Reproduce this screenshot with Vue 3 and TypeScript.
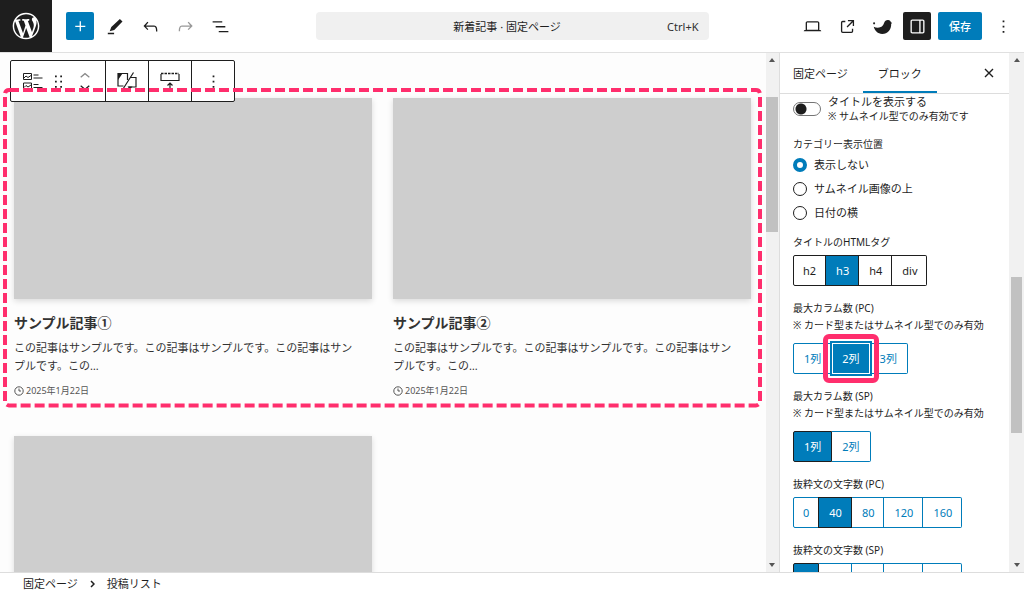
<script setup lang="ts">
import { ref } from 'vue'

interface Post {
  id: number
  title: string
}

const excerpt = 'この記事はサンプルです。この記事はサンプルです。この記事はサンプルです。この…'
const date = '2025年1月22日'
const posts: Post[] = [
  { id: 1, title: 'サンプル記事①' },
  { id: 2, title: 'サンプル記事②' },
]

const showTitle = ref(false)
const category = ref('none')
const categories = [
  { value: 'none', label: '表示しない' },
  { value: 'thumb', label: 'サムネイル画像の上' },
  { value: 'date', label: '日付の横' },
]

interface Group {
  key: string
  label: string
  help?: string
  dark?: boolean
  focus?: boolean
  options: string[]
  value: string
}

const columnHelp = '※ カード型またはサムネイル型でのみ有効'
const lengths = ['0', '40', '80', '120', '160']
const groups = ref<Group[]>([
  { key: 'tag', label: 'タイトルのHTMLタグ', dark: true, options: ['h2', 'h3', 'h4', 'div'], value: 'h3' },
  { key: 'col-pc', label: '最大カラム数 (PC)', help: columnHelp, focus: true, options: ['1列', '2列', '3列'], value: '2列' },
  { key: 'col-sp', label: '最大カラム数 (SP)', help: columnHelp, options: ['1列', '2列'], value: '1列' },
  { key: 'len-pc', label: '抜粋文の文字数 (PC)', options: lengths, value: '40' },
  { key: 'len-sp', label: '抜粋文の文字数 (SP)', options: lengths, value: '0' },
])
</script>

<template>
  <div class="editor">
    <header class="topbar">
      <div class="tools">
        <a class="logo" href="#" aria-label="WordPress">
          <svg viewBox="-2 -2 24 24"><path d="M20 10c0-5.51-4.49-10-10-10C4.48 0 0 4.49 0 10c0 5.52 4.48 10 10 10 5.51 0 10-4.48 10-10zM7.78 15.37L4.37 6.22c.55-.02 1.17-.08 1.17-.08.5-.06.44-1.13-.06-1.11 0 0-1.45.11-2.37.11-.18 0-.37 0-.58-.01C4.12 2.69 6.87 1.11 10 1.11c2.33 0 4.45.87 6.05 2.34-.68-.11-1.65.39-1.65 1.58 0 .74.45 1.36.9 2.1.35.61.55 1.36.55 2.46 0 1.49-1.4 5-1.4 5l-3.03-8.37c.54-.02.82-.17.82-.17.5-.05.44-1.25-.06-1.22 0 0-1.44.12-2.38.12-.87 0-2.33-.12-2.33-.12-.5-.03-.56 1.2-.06 1.22l.92.08 1.26 3.41zM17.41 10c.24-.64.74-1.87.43-4.25.7 1.29 1.05 2.71 1.05 4.25 0 3.29-1.73 6.24-4.4 7.78.97-2.59 1.94-5.2 2.92-7.78zM6.1 18.09C3.12 16.65 1.11 13.53 1.11 10c0-1.3.23-2.48.72-3.59C3.25 10.3 4.67 14.2 6.1 18.09zm4.03-6.63l2.58 6.98c-.86.29-1.76.45-2.71.45-.79 0-1.57-.11-2.29-.33.81-2.38 1.62-4.74 2.42-7.1z" /></svg>
        </a>
        <button class="icon-btn primary" type="button" aria-label="ブロック挿入">
          <svg viewBox="0 0 24 24"><path d="M11 12.5V17.5H12.5V12.5H17.5V11H12.5V6H11V11H6V12.5H11Z" /></svg>
        </button>
        <button class="icon-btn" type="button" aria-label="ツール">
          <svg viewBox="0 0 24 24"><path d="m20 6.400-3-3-9.800 9.100-1.800 5 5.200-1.600L20 6.400ZM10.400 19.200H3.200v1.600h7.200v-1.600Z" /></svg>
        </button>
        <button class="icon-btn" type="button" aria-label="元に戻す">
          <svg viewBox="0 0 24 24"><path d="M18.3 11.7c-.6-.6-1.4-.9-2.3-.9H6.7l2.9-3.3-1.1-1-4.5 5L8.5 16l1-1-2.7-2.7H16c.5 0 .9.2 1.3.5 1 1 1 3.4 1 4.5v.3h1.5v-.2c0-1.5 0-4.3-1.5-5.7z" /></svg>
        </button>
        <button class="icon-btn faded" type="button" aria-label="やり直す">
          <svg viewBox="0 0 24 24"><path d="M15.6 6.5l-1.1 1 2.9 3.3H8c-.9 0-1.7.3-2.3.9-1.4 1.5-1.4 4.2-1.4 5.6v.2h1.5v-.3c0-1.1 0-3.5 1-4.5.3-.3.7-.5 1.3-.5h9.2L14.5 15l1.1 1.1 4.6-4.6-4.6-5z" /></svg>
        </button>
        <button class="icon-btn" type="button" aria-label="リスト表示">
          <svg viewBox="0 0 24 24"><path d="M3 6h11v1.5H3V6Zm3.5 5.5h11V13h-11v-1.5ZM21 17H10v1.5h11V17Z" /></svg>
        </button>
      </div>
      <button class="command" type="button">
        <span class="doc">新着記事 · 固定ページ</span>
        <span class="shortcut">Ctrl+K</span>
      </button>
      <div class="actions">
        <button class="icon-btn" type="button" aria-label="表示">
          <svg viewBox="0 0 24 24"><path d="M20.5 16h-.7V8c0-1.1-.9-2-2-2H6.2c-1.1 0-2 .9-2 2v8h-.7c-.8 0-1.5.7-1.5 1.5h20c0-.8-.7-1.5-1.5-1.5zM5.7 8c0-.3.2-.5.5-.5h11.6c.3 0 .5.2.5.5v7.6H5.7V8z" /></svg>
        </button>
        <button class="icon-btn" type="button" aria-label="固定ページを表示">
          <svg viewBox="0 0 24 24"><path d="M19.5 4.5h-7V6h4.44l-5.97 5.97 1.06 1.06L18 7.06v4.44h1.5v-7Zm-13 1a2 2 0 0 0-2 2v10a2 2 0 0 0 2 2h10a2 2 0 0 0 2-2v-3H17v3a.5.5 0 0 1-.5.5h-10a.5.5 0 0 1-.5-.5v-10a.5.5 0 0 1 .5-.5h3V5.5h-3Z" /></svg>
        </button>
        <button class="icon-btn" type="button" aria-label="テーマ設定">
          <svg viewBox="0 0 24 24"><circle cx="2.4" cy="8.4" r="1.200" /><path d="M2 12.400c2.600 1.300 5.600 1.400 8 .3 2-1 2.900-2.400 3.700-4.500.9-2.500 2.600-3.700 4.800-3.500 1.800.2 2.800 1.200 3.200 2.500l1.300.8-1.100.8c.4 6.600-3.900 11.700-10.200 11.700C6.500 20.500 3.200 17.100 2 12.400z" /></svg>
        </button>
        <button class="icon-btn active" type="button" aria-label="設定" aria-pressed="true">
          <svg viewBox="0 0 24 24"><path d="M18 4H6c-1.1 0-2 .9-2 2v12c0 1.1.9 2 2 2h12c1.1 0 2-.9 2-2V6c0-1.1-.9-2-2-2zm-4 14.5H6c-.3 0-.5-.2-.5-.5V6c0-.3.2-.5.5-.5h8v13zm4.5-.5c0 .3-.2.5-.5.5h-2.5v-13H18c.3 0 .5.2.5.5v12z" /></svg>
        </button>
        <button class="save" type="button">保存</button>
        <button class="icon-btn" type="button" aria-label="オプション">
          <svg viewBox="0 0 24 24"><path d="M13 19h-2v-2h2v2zm0-6h-2v-2h2v2zm0-6h-2V5h2v2z" /></svg>
        </button>
      </div>
    </header>

    <div class="body">
      <main class="canvas">
        <div class="block-toolbar" role="toolbar" aria-label="ブロックツール">
          <div class="section wide">
            <button class="tool" type="button" aria-label="投稿リスト">
              <svg class="list-icon" viewBox="0 0 20 18" fill="none" stroke="#1e1e1e"><path d="M.5 1.5h8v6h-8zM.5 11h8v6h-8zM1 6l2-2 2 1.500L8 3.500M1 15.500l2-2 2 1.500 3-2M10.500 3h5M10.500 6h9M10.500 12.500h5M10.500 15.500h9" /></svg>
            </button>
            <button class="tool" type="button" aria-label="ドラッグ">
              <svg viewBox="0 0 24 24"><path d="M8 7h2V5H8v2zm0 6h2v-2H8v2zm0 6h2v-2H8v2zm6-14v2h2V5h-2zm0 8h2v-2h-2v2zm0 6h2v-2h-2v2z" /></svg>
            </button>
            <div class="movers">
              <button class="tool muted" type="button" aria-label="上に移動">
                <svg viewBox="5 7 14 7"><path d="M6.5 12.4L12 8l5.5 4.4-.9 1.2L12 10l-4.5 3.6-1-1.2z" /></svg>
              </button>
              <button class="tool" type="button" aria-label="下に移動">
                <svg viewBox="5 10 14 7"><path d="M17.5 11.6L12 16l-5.5-4.4.9-1.2L12 14l4.5-3.6 1 1.2z" /></svg>
              </button>
            </div>
          </div>
          <div class="section">
            <button class="tool" type="button" aria-label="スタイル">
              <svg class="style-icon" viewBox="0 0 20 18" fill="none" stroke="#1e1e1e" stroke-width="1.2"><path d="M6.500 14H1V1.500h9.500V8M16.500.5 6 17M13.500 5.500H19V15h-7.500" /><path d="M1 1.500h4.500L1 8zM10.500 14.500h5L13 17.500z" fill="#1e1e1e" stroke="none" /></svg>
            </button>
          </div>
          <div class="section">
            <button class="tool" type="button" aria-label="追加">
              <svg class="insert-icon" viewBox="0 0 20 18" fill="none" stroke="#1e1e1e" stroke-width="1.2"><path d="M1 2v6.500h18V2" /><path d="M1 1.500h18" stroke-width="1.500" stroke-dasharray="2.500 1" /><path d="M10 18v-6.500M7.500 13.500 10 11l2.500 2.500" /></svg>
            </button>
          </div>
          <div class="section">
            <button class="tool" type="button" aria-label="オプション">
              <svg viewBox="0 0 24 24"><path d="M13 19h-2v-2h2v2zm0-6h-2v-2h2v2zm0-6h-2V5h2v2z" /></svg>
            </button>
          </div>
        </div>

        <div class="row">
          <article v-for="post in posts" :key="post.id" class="card">
            <div class="thumb"></div>
            <h3>{{ post.title }}</h3>
            <p>{{ excerpt }}</p>
            <time>
              <svg viewBox="0 0 10 10" fill="none" stroke="#555"><circle cx="5" cy="5" r="4.2" /><path d="M5 2.500V5h2" /></svg>
              {{ date }}
            </time>
          </article>
          <svg class="marquee" aria-hidden="true"><rect width="100%" height="100%" rx="4" /></svg>
        </div>
        <div class="row">
          <article class="card"><div class="thumb"></div></article>
        </div>
      </main>

      <div class="scrollbar narrow" aria-hidden="true">
        <i class="up"></i>
        <div class="track"><div class="before-a"></div><div class="thumb-bar size-a"></div></div>
        <i class="down"></i>
      </div>

      <aside class="sidebar">
        <div class="tabs" role="tablist">
          <button type="button" role="tab" aria-selected="false">固定ページ</button>
          <button type="button" role="tab" class="current" aria-selected="true">ブロック</button>
          <button type="button" class="close" aria-label="設定を閉じる">
            <svg viewBox="0 0 10 10" fill="none" stroke="#1e1e1e" stroke-width="1.400"><path d="m1 1 8 8M9 1 1 9" /></svg>
          </button>
        </div>
        <div class="panel">
          <div class="toggle-row">
            <input id="show-title" v-model="showTitle" class="toggle" type="checkbox" />
            <div>
              <label for="show-title">タイトルを表示する</label>
              <p class="help">※ サムネイル型でのみ有効です</p>
            </div>
          </div>

          <fieldset class="radios">
            <legend>カテゴリー表示位置</legend>
            <label v-for="c in categories" :key="c.value">
              <input v-model="category" type="radio" name="category" :value="c.value" />
              {{ c.label }}
            </label>
          </fieldset>

          <div v-for="g in groups" :key="g.key" class="field">
            <div :id="g.key" class="field-label">{{ g.label }}</div>
            <p v-if="g.help" class="help note">{{ g.help }}</p>
            <div
              class="segments"
              :class="{ dark: g.dark, focus: g.focus, roomy: g.help }"
              role="group"
              :aria-labelledby="g.key"
            >
              <button
                v-for="o in g.options"
                :key="o"
                type="button"
                :class="{ on: o === g.value }"
                :aria-pressed="o === g.value"
                @click="g.value = o"
              >{{ o }}</button>
            </div>
          </div>
        </div>
      </aside>

      <div class="scrollbar" aria-hidden="true">
        <i class="up"></i>
        <div class="track"><div class="before-b"></div><div class="thumb-bar size-b"></div></div>
        <i class="down"></i>
      </div>
    </div>

    <footer class="crumbs">
      <a href="#">固定ページ</a>
      <svg viewBox="0 0 5 8" fill="none" stroke="#1e1e1e" stroke-width="1.500"><path d="m1 1 3 3-3 3" /></svg>
      <a href="#">投稿リスト</a>
    </footer>
  </div>
</template>

<style>
html,
body {
  margin: 0;
  background: #fff;
}
</style>

<style scoped>
* {
  box-sizing: border-box;
}
.editor {
  display: flex;
  flex-direction: column;
  height: 100vh;
  overflow: hidden;
  color: #1e1e1e;
  font: 11px/17px "Noto Sans", "Noto Sans CJK JP", sans-serif;
}
button {
  margin: 0;
  padding: 0;
  border: 0;
  background: none;
  color: inherit;
  font: inherit;
  white-space: nowrap;
}
svg {
  display: block;
  flex: none;
}
p,
h3 {
  margin: 0;
}

.topbar {
  display: grid;
  grid-template-columns: 1fr minmax(0, 393px) 1fr;
  align-items: center;
  flex: none;
  height: 53px;
  border-bottom: 1px solid #e0e0e0;
}
.tools,
.actions {
  display: flex;
  align-items: center;
  gap: 7px;
}
.actions {
  justify-content: flex-end;
  padding-right: 7px;
}
.logo {
  display: flex;
  align-items: center;
  justify-content: center;
  width: 52px;
  height: 52px;
  margin-right: 7px;
  background: #1e1e1e;
}
.logo svg {
  width: 32px;
  height: 32px;
  fill: #fff;
}
.icon-btn {
  display: flex;
  align-items: center;
  justify-content: center;
  width: 28px;
  height: 28px;
  border-radius: 2px;
}
.icon-btn svg {
  width: 21px;
  height: 21px;
  fill: #1e1e1e;
}
.icon-btn.primary {
  background: #007cba;
}
.icon-btn.active {
  background: #1e1e1e;
}
.icon-btn.primary svg,
.icon-btn.active svg {
  fill: #fff;
}
.icon-btn.faded {
  opacity: 0.45;
}
.command {
  display: grid;
  grid-template-columns: 1fr auto 1fr;
  align-items: center;
  height: 28px;
  padding: 0 10px 0 0;
  border-radius: 4px;
  background: #f0f0f0;
}
.doc {
  grid-column: 2;
}
.shortcut {
  text-align: right;
  color: #2f2f2f;
}
.save {
  width: 44px;
  height: 28px;
  border-radius: 2px;
  background: #007cba;
  color: #fff;
  font-weight: 500;
}

.body {
  display: flex;
  flex: 1;
  min-height: 0;
}
.canvas {
  position: relative;
  flex: 1;
  min-width: 0;
  padding: 45px 15px 0 14px;
  overflow: hidden;
  background: #fdfdfd;
}
.row {
  position: relative;
  display: grid;
  grid-template-columns: 1fr 1fr;
  gap: 21px;
  margin-bottom: 39px;
}
.thumb {
  aspect-ratio: 16 / 9;
  background: #cecece;
  box-shadow: 0 2px 6px rgba(0, 0, 0, 0.14);
}
.card {
  color: #333;
}
.card h3 {
  margin-top: 14px;
  font-size: 14px;
  font-weight: 700;
  line-height: 20px;
}
.card p {
  margin-top: 6px;
  padding-right: 12px;
  font-size: 11px;
  line-height: 18px;
}
.card time {
  display: flex;
  align-items: center;
  gap: 2px;
  margin-top: 10px;
  color: #555;
  font-size: 9px;
  line-height: 12px;
}
.card time svg {
  width: 10px;
  height: 10px;
}
.marquee {
  position: absolute;
  z-index: 3;
  top: -8px;
  left: -9px;
  width: calc(100% + 18px);
  height: calc(100% + 16px);
  overflow: visible;
  pointer-events: none;
}
.marquee rect {
  fill: none;
  stroke: #ff2e6d;
  stroke-width: 4px;
  stroke-dasharray: 10 4;
}

.block-toolbar {
  position: absolute;
  z-index: 2;
  top: 7px;
  left: 10px;
  display: flex;
  height: 42px;
  border: 1px solid #1e1e1e;
  border-radius: 2px;
  background: #fff;
}
.section {
  display: flex;
  align-items: center;
  justify-content: center;
  width: 43px;
}
.section + .section {
  border-left: 1px solid #1e1e1e;
}
.section.wide {
  width: 94px;
  gap: 5px;
  padding-right: 3px;
}
.tool svg {
  width: 21px;
  height: 21px;
  fill: #1e1e1e;
}
.tool .list-icon,
.tool .style-icon,
.tool .insert-icon {
  width: 20px;
  height: 18px;
  fill: none;
}
.movers {
  display: flex;
  flex-direction: column;
  gap: 7px;
  padding-left: 5px;
}
.movers svg {
  width: 12px;
  height: 6px;
}
.muted svg {
  fill: #888;
}

.scrollbar {
  display: flex;
  flex-direction: column;
  flex: none;
  width: 15px;
  padding: 5px 2px;
  background: #f1f1f1;
}
.scrollbar.narrow {
  width: 13px;
  padding: 5px 1px 5px 0;
}
.scrollbar i {
  flex: none;
  align-self: center;
  border: 0 solid transparent;
  border-width: 0 3px;
}
.scrollbar .up {
  border-bottom: 4px solid #555;
}
.scrollbar .down {
  border-top: 4px solid #555;
}
.track {
  display: flex;
  flex-direction: column;
  flex: 1;
}
.before-a {
  flex: 0 0 7%;
}
.before-b {
  flex: 0 0 43%;
}
.thumb-bar {
  background: #c1c1c1;
}
.size-a {
  flex: 0 0 27%;
}
.size-b {
  flex: 0 0 31%;
}

.sidebar {
  display: flex;
  flex-direction: column;
  flex: none;
  width: 230px;
  border-left: 1px solid #ddd;
  overflow: hidden;
}
.tabs {
  display: flex;
  flex: none;
  height: 41px;
  padding-left: 13px;
  border-bottom: 1px solid #ddd;
}
.tabs button {
  padding-right: 15px;
}
.tabs .current {
  padding-left: 15px;
  box-shadow: inset 0 -2px 0 #007cba;
}
.tabs .close {
  margin-left: auto;
}
.close svg {
  width: 10px;
  height: 10px;
}
.panel {
  flex: 1;
  min-height: 0;
  padding: 1px 13px 0;
  overflow-y: auto;
  scrollbar-width: none;
}
.toggle-row {
  display: flex;
  align-items: center;
  gap: 7px;
  margin-bottom: 14px;
  line-height: 14px;
}
.toggle-row label {
  display: block;
}
.help,
.field-label,
legend {
  font-size: 10px;
  line-height: 14px;
}
.toggle {
  flex: none;
  appearance: none;
  width: 28px;
  height: 14px;
  margin: 0;
  border: 1px solid #757575;
  border-radius: 7px;
  background: radial-gradient(circle at 7px 6px, #1e1e1e 5px, transparent 6px) #fff;
}
.toggle:checked {
  background: radial-gradient(circle at 19px 6px, #fff 5px, transparent 6px) #007cba;
}
.radios {
  display: flex;
  flex-direction: column;
  gap: 7px;
  margin: 0 0 14px;
  padding: 0;
  border: 0;
}
.radios legend {
  margin-bottom: 5px;
  padding: 0;
}
.radios label {
  display: flex;
  align-items: center;
  gap: 7px;
}
.radios input {
  appearance: none;
  width: 14px;
  height: 14px;
  margin: 0;
  border: 1px solid #1e1e1e;
  border-radius: 50%;
  background: #fff;
}
.radios input:checked {
  border: 4px solid #007cba;
}
.field {
  margin-bottom: 15px;
}
.note {
  margin: 3px 0 11px;
}
.segments {
  display: flex;
  height: 31px;
  margin-top: 6px;
  color: #007cba;
}
.segments button {
  position: relative;
  padding: 0 9px 0 10px;
  border: 1px solid currentColor;
  border-left-width: 0;
}
.segments button:first-child {
  padding-left: 9px;
  border-left-width: 1px;
  border-radius: 2px 0 0 2px;
}
.segments button:last-child {
  border-radius: 0 2px 2px 0;
}
.segments.roomy button,
.segments.roomy button:first-child {
  padding: 0 10px;
}
.segments.dark {
  color: #1e1e1e;
}
.segments button.on {
  border-color: #1e1e1e;
  background: #007cba;
  color: #fff;
}
.segments .on:not(:first-child) {
  box-shadow: -1px 0 0 #1e1e1e;
}
.segments.focus button.on {
  z-index: 1;
  border: 1px solid #fff;
  padding: 0 9px;
  box-shadow: 0 0 0 2px #007cba;
}
.segments.focus .on::after {
  position: absolute;
  inset: -10px;
  border: 5px solid #ff2e6d;
  border-radius: 6px;
  content: "";
}

.crumbs {
  display: flex;
  align-items: center;
  gap: 12px;
  flex: none;
  height: 22px;
  padding-left: 23px;
  border-top: 1px solid #ddd;
}
.crumbs a {
  color: inherit;
  text-decoration: none;
}
.crumbs svg {
  width: 5px;
  height: 8px;
}
</style>
